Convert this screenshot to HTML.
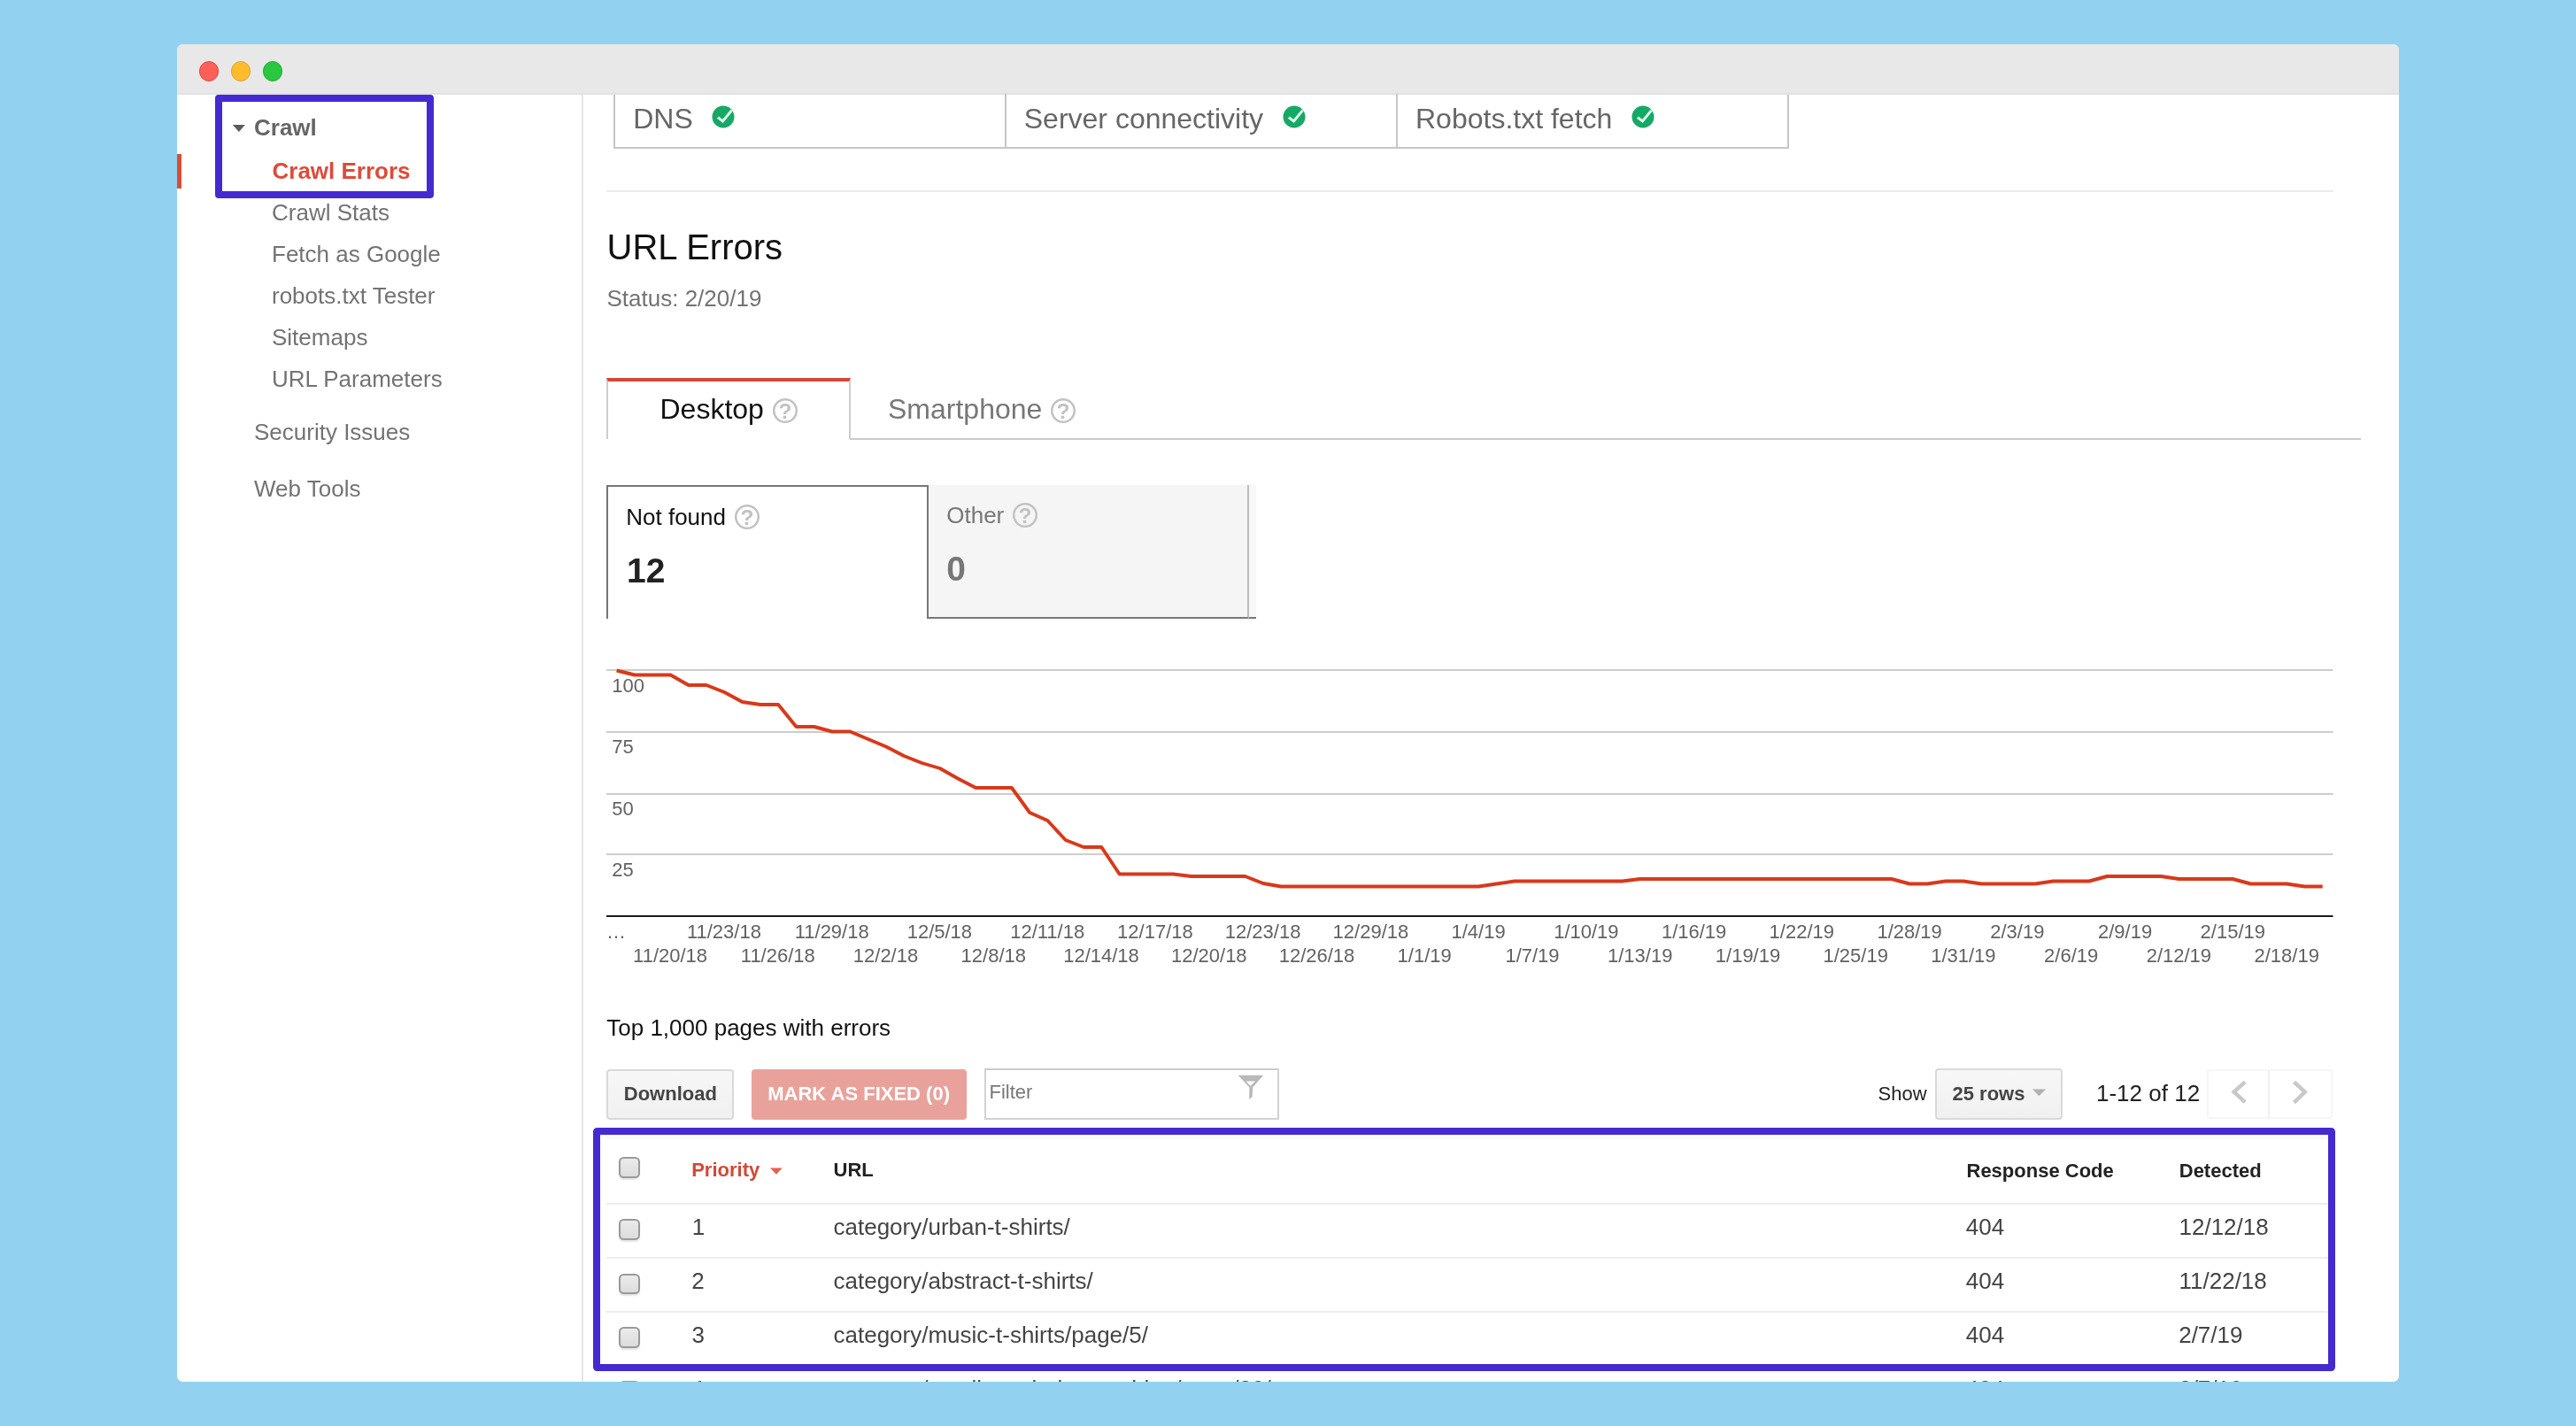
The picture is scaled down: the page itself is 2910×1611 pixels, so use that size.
<!DOCTYPE html>
<html lang="en"><head><meta charset="utf-8"><title>Search Console - Crawl Errors</title><style>
html,body{margin:0;padding:0}
body{width:2910px;height:1611px;background:#92d2f0;position:relative;overflow:hidden;font-family:"Liberation Sans",sans-serif}
.win{position:absolute;left:200px;top:50px;width:2510px;height:1511px;border-radius:6.5px;background:#fff;overflow:hidden}
.page{position:absolute;left:-200px;top:-50px;width:2910px;height:1611px;will-change:transform}
.b{position:absolute;display:block}
.t{position:absolute;white-space:nowrap;line-height:1}
</style></head>
<body>
<div class="win"><div class="page">
<div class="b " style="left:200.00px;top:50.00px;width:2510.00px;height:56.50px;background:#e8e8e8;border-bottom:2px solid #e1e1e1;box-sizing:border-box;"></div>
<div class="b " style="left:224.95px;top:69.45px;width:22.50px;height:22.50px;background:#fe5f57;border:1px solid #e2463f;box-sizing:border-box;border-radius:50%;"></div>
<div class="b " style="left:260.95px;top:69.45px;width:22.50px;height:22.50px;background:#febc2e;border:1px solid #e0a028;box-sizing:border-box;border-radius:50%;"></div>
<div class="b " style="left:296.95px;top:69.45px;width:22.50px;height:22.50px;background:#29c840;border:1px solid #1eab2e;box-sizing:border-box;border-radius:50%;"></div>
<div class="b " style="left:657.00px;top:106.50px;width:2.00px;height:1455.50px;background:#e6e6e6;"></div>
<div class="b " style="left:200.00px;top:174.00px;width:5.00px;height:38.50px;background:#dd4b39;"></div>
<svg class="b" style="left:262px;top:140px" width="16" height="10" viewBox="0 0 16 10"><path d="M0.9 0.9 L14.9 0.9 L7.9 8.9 Z" fill="#5c5c5c"/></svg>
<div class="t " style="left:287.00px;top:131.24px;font-size:26px;color:#666;font-weight:bold;">Crawl</div>
<div class="t " style="left:307.50px;top:180.24px;font-size:26px;color:#dd4b39;font-weight:bold;">Crawl Errors</div>
<div class="t " style="left:307.00px;top:227.24px;font-size:26px;color:#737373;">Crawl Stats</div>
<div class="t " style="left:307.00px;top:274.24px;font-size:26px;color:#737373;">Fetch as Google</div>
<div class="t " style="left:307.00px;top:321.24px;font-size:26px;color:#737373;">robots.txt Tester</div>
<div class="t " style="left:307.00px;top:367.74px;font-size:26px;color:#737373;">Sitemaps</div>
<div class="t " style="left:307.00px;top:415.24px;font-size:26px;color:#737373;">URL Parameters</div>
<div class="t " style="left:287.00px;top:474.74px;font-size:26px;color:#737373;">Security Issues</div>
<div class="t " style="left:287.00px;top:539.24px;font-size:26px;color:#737373;">Web Tools</div>
<div class="b " style="left:243.00px;top:107.00px;width:247.00px;height:117.00px;border:8px solid #452ad1;border-radius:4px;box-sizing:border-box;"></div>
<div class="b " style="left:693.00px;top:106.50px;width:1328.00px;height:61.25px;border:2px solid #c6c6c6;border-top:none;box-sizing:border-box;"></div>
<div class="b " style="left:1135.00px;top:106.00px;width:2.00px;height:60.00px;background:#c6c6c6;"></div>
<div class="b " style="left:1577.00px;top:106.00px;width:2.00px;height:60.00px;background:#c6c6c6;"></div>
<div class="t " style="left:715.25px;top:118.16px;font-size:32px;color:#666;">DNS</div>
<svg class="b" style="left:804.10px;top:118.70px" width="26" height="26" viewBox="0 0 26 26"><circle cx="13" cy="13" r="12.5" fill="#17a866"/><path d="M6.9 13.6 L12.5 17.9 L22.6 5.6" fill="none" stroke="#dcfbea" stroke-width="3"/></svg>
<div class="t " style="left:1156.75px;top:118.16px;font-size:32px;color:#666;">Server connectivity</div>
<svg class="b" style="left:1449.00px;top:118.70px" width="26" height="26" viewBox="0 0 26 26"><circle cx="13" cy="13" r="12.5" fill="#17a866"/><path d="M6.9 13.6 L12.5 17.9 L22.6 5.6" fill="none" stroke="#dcfbea" stroke-width="3"/></svg>
<div class="t " style="left:1599.00px;top:118.16px;font-size:32px;color:#666;">Robots.txt fetch</div>
<svg class="b" style="left:1843.20px;top:118.70px" width="26" height="26" viewBox="0 0 26 26"><circle cx="13" cy="13" r="12.5" fill="#17a866"/><path d="M6.9 13.6 L12.5 17.9 L22.6 5.6" fill="none" stroke="#dcfbea" stroke-width="3"/></svg>
<div class="b " style="left:685.00px;top:215.00px;width:1951.00px;height:2.00px;background:#ececec;"></div>
<div class="t " style="left:685.50px;top:259.14px;font-size:40px;color:#111;">URL Errors</div>
<div class="t " style="left:685.50px;top:324.49px;font-size:26px;color:#737373;">Status: 2/20/19</div>
<div class="b " style="left:960.00px;top:494.75px;width:1707.00px;height:2.00px;background:#cacaca;"></div>
<div class="b " style="left:685.00px;top:426.50px;width:276.00px;height:69.50px;border-top:4.25px solid #d14836;border-left:2px solid #cdcdcd;border-right:2px solid #cdcdcd;box-sizing:border-box;background:#fff;"></div>
<div class="t " style="left:745.50px;top:446.16px;font-size:32px;color:#111;">Desktop</div>
<svg class="b" style="left:871.90px;top:448.90px" width="30" height="30" viewBox="0 0 30 30"><circle cx="15" cy="15" r="12.75" fill="#fff" stroke="#c2c2c2" stroke-width="2.5"/><text x="15" y="23.6" text-anchor="middle" font-family="Liberation Sans, sans-serif" font-weight="bold" font-size="24.5" fill="#c2c2c2">?</text></svg>
<div class="t " style="left:1003.00px;top:446.16px;font-size:32px;color:#777;">Smartphone</div>
<svg class="b" style="left:1185.75px;top:448.90px" width="30" height="30" viewBox="0 0 30 30"><circle cx="15" cy="15" r="12.75" fill="#fff" stroke="#c2c2c2" stroke-width="2.5"/><text x="15" y="23.6" text-anchor="middle" font-family="Liberation Sans, sans-serif" font-weight="bold" font-size="24.5" fill="#c2c2c2">?</text></svg>
<div class="b " style="left:1049.00px;top:547.50px;width:370.00px;height:151.25px;background:#f8f8f8;border-bottom:2.25px solid #777;box-sizing:border-box;"></div>
<div class="b " style="left:1049.00px;top:547.50px;width:362.25px;height:151.25px;background:#f5f5f5;border-bottom:2.25px solid #777;border-right:2px solid #bdbdbd;box-sizing:border-box;"></div>
<div class="b " style="left:685.00px;top:547.50px;width:364.00px;height:151.25px;background:#fff;border-top:2px solid #777;border-left:2px solid #777;border-right:2px solid #777;box-sizing:border-box;"></div>
<div class="t " style="left:707.25px;top:570.99px;font-size:26px;color:#111;">Not found</div>
<svg class="b" style="left:828.75px;top:568.75px" width="30" height="30" viewBox="0 0 30 30"><circle cx="15" cy="15" r="12.75" fill="#fff" stroke="#c2c2c2" stroke-width="2.5"/><text x="15" y="23.6" text-anchor="middle" font-family="Liberation Sans, sans-serif" font-weight="bold" font-size="24.5" fill="#c2c2c2">?</text></svg>
<div class="t " style="left:708.00px;top:624.74px;font-size:39px;color:#222;font-weight:bold;">12</div>
<div class="t " style="left:1069.25px;top:568.74px;font-size:26px;color:#777;">Other</div>
<svg class="b" style="left:1143.00px;top:566.75px" width="30" height="30" viewBox="0 0 30 30"><circle cx="15" cy="15" r="12.75" fill="#f5f5f5" stroke="#c2c2c2" stroke-width="2.5"/><text x="15" y="23.6" text-anchor="middle" font-family="Liberation Sans, sans-serif" font-weight="bold" font-size="24.5" fill="#c2c2c2">?</text></svg>
<div class="t " style="left:1069.25px;top:622.74px;font-size:39px;color:#777;font-weight:bold;">0</div>
<svg class="b" style="left:0;top:0" width="2910" height="1611" viewBox="0 0 2910 1611" font-family="Liberation Sans, sans-serif"><rect x="685" y="756.00" width="1950.5" height="2" fill="#cccccc"/><rect x="685" y="826.00" width="1950.5" height="2" fill="#cccccc"/><rect x="685" y="896.00" width="1950.5" height="2" fill="#cccccc"/><rect x="685" y="964.10" width="1950.5" height="2" fill="#cccccc"/><rect x="685" y="1034" width="1950.5" height="2" fill="#1c1c1c"/><text x="691.3" y="781.75" font-size="22" fill="#626262">100</text><text x="691.3" y="850.9" font-size="22" fill="#626262">75</text><text x="691.3" y="920.5" font-size="22" fill="#626262">50</text><text x="691.3" y="990" font-size="22" fill="#626262">25</text><polyline points="696.6,757.5 716.9,762.5 737.2,762.5 757.5,762.5 777.7,774.0 798.0,774.0 818.3,782.0 838.6,793.0 858.9,796.0 879.2,796.0 899.5,821.0 919.7,821.0 940.0,826.5 960.3,826.5 980.6,835.0 1000.9,843.5 1021.2,854.0 1041.4,862.0 1061.7,868.0 1082.0,879.5 1102.3,890.0 1122.6,890.0 1142.9,890.0 1163.2,918.0 1183.4,927.0 1203.7,949.0 1224.0,957.0 1244.3,957.0 1264.6,987.5 1284.9,987.5 1305.2,987.5 1325.4,987.5 1345.7,990.0 1366.0,990.0 1386.3,990.0 1406.6,990.0 1426.9,998.0 1447.1,1001.5 1467.4,1001.5 1487.7,1001.5 1508.0,1001.5 1528.3,1001.5 1548.6,1001.5 1568.9,1001.5 1589.1,1001.5 1609.4,1001.5 1629.7,1001.5 1650.0,1001.5 1670.3,1001.5 1690.6,998.5 1710.8,995.5 1731.1,995.5 1751.4,995.5 1771.7,995.5 1792.0,995.5 1812.3,995.5 1832.6,995.5 1852.8,993.0 1873.1,993.0 1893.4,993.0 1913.7,993.0 1934.0,993.0 1954.3,993.0 1974.6,993.0 1994.8,993.0 2015.1,993.0 2035.4,993.0 2055.7,993.0 2076.0,993.0 2096.3,993.0 2116.6,993.0 2136.8,993.0 2157.1,998.5 2177.4,998.5 2197.7,995.5 2218.0,995.5 2238.3,998.5 2258.5,998.5 2278.8,998.5 2299.1,998.5 2319.4,995.5 2339.7,995.5 2360.0,995.5 2380.3,990.0 2400.5,990.0 2420.8,990.0 2441.1,990.0 2461.4,993.0 2481.7,993.0 2502.0,993.0 2522.2,993.0 2542.5,998.5 2562.8,998.5 2583.1,998.5 2603.4,1001.5 2623.7,1001.5" fill="none" stroke="#d8391a" stroke-width="3.9" stroke-linejoin="round"/><text x="685" y="1060.4" font-size="22" fill="#626262">…</text><text x="757.1" y="1087" font-size="22" fill="#626262" text-anchor="middle">11/20/18</text><text x="817.9" y="1060.4" font-size="22" fill="#626262" text-anchor="middle">11/23/18</text><text x="878.8" y="1087" font-size="22" fill="#626262" text-anchor="middle">11/26/18</text><text x="939.7" y="1060.4" font-size="22" fill="#626262" text-anchor="middle">11/29/18</text><text x="1000.5" y="1087" font-size="22" fill="#626262" text-anchor="middle">12/2/18</text><text x="1061.4" y="1060.4" font-size="22" fill="#626262" text-anchor="middle">12/5/18</text><text x="1122.3" y="1087" font-size="22" fill="#626262" text-anchor="middle">12/8/18</text><text x="1183.2" y="1060.4" font-size="22" fill="#626262" text-anchor="middle">12/11/18</text><text x="1244.0" y="1087" font-size="22" fill="#626262" text-anchor="middle">12/14/18</text><text x="1304.9" y="1060.4" font-size="22" fill="#626262" text-anchor="middle">12/17/18</text><text x="1365.8" y="1087" font-size="22" fill="#626262" text-anchor="middle">12/20/18</text><text x="1426.6" y="1060.4" font-size="22" fill="#626262" text-anchor="middle">12/23/18</text><text x="1487.5" y="1087" font-size="22" fill="#626262" text-anchor="middle">12/26/18</text><text x="1548.4" y="1060.4" font-size="22" fill="#626262" text-anchor="middle">12/29/18</text><text x="1609.2" y="1087" font-size="22" fill="#626262" text-anchor="middle">1/1/19</text><text x="1670.1" y="1060.4" font-size="22" fill="#626262" text-anchor="middle">1/4/19</text><text x="1731.0" y="1087" font-size="22" fill="#626262" text-anchor="middle">1/7/19</text><text x="1791.9" y="1060.4" font-size="22" fill="#626262" text-anchor="middle">1/10/19</text><text x="1852.7" y="1087" font-size="22" fill="#626262" text-anchor="middle">1/13/19</text><text x="1913.6" y="1060.4" font-size="22" fill="#626262" text-anchor="middle">1/16/19</text><text x="1974.5" y="1087" font-size="22" fill="#626262" text-anchor="middle">1/19/19</text><text x="2035.3" y="1060.4" font-size="22" fill="#626262" text-anchor="middle">1/22/19</text><text x="2096.2" y="1087" font-size="22" fill="#626262" text-anchor="middle">1/25/19</text><text x="2157.1" y="1060.4" font-size="22" fill="#626262" text-anchor="middle">1/28/19</text><text x="2217.9" y="1087" font-size="22" fill="#626262" text-anchor="middle">1/31/19</text><text x="2278.8" y="1060.4" font-size="22" fill="#626262" text-anchor="middle">2/3/19</text><text x="2339.7" y="1087" font-size="22" fill="#626262" text-anchor="middle">2/6/19</text><text x="2400.6" y="1060.4" font-size="22" fill="#626262" text-anchor="middle">2/9/19</text><text x="2461.4" y="1087" font-size="22" fill="#626262" text-anchor="middle">2/12/19</text><text x="2522.3" y="1060.4" font-size="22" fill="#626262" text-anchor="middle">2/15/19</text><text x="2583.2" y="1087" font-size="22" fill="#626262" text-anchor="middle">2/18/19</text></svg>
<div class="t " style="left:685.25px;top:1148.24px;font-size:26px;color:#111;">Top 1,000 pages with errors</div>
<div class="b " style="left:685.00px;top:1207.50px;width:144.00px;height:57.00px;border:2px solid #d9d9d9;border-radius:4px;box-sizing:border-box;background:linear-gradient(#f7f7f7,#f0f0f0);"></div>
<div class="t " style="left:704.75px;top:1224.63px;font-size:22px;color:#444;font-weight:bold;">Download</div>
<div class="b " style="left:849.00px;top:1207.50px;width:243.25px;height:57.00px;background:#e9a29b;border-radius:4px;"></div>
<div class="t " style="left:867.25px;top:1224.63px;font-size:22px;color:#fff;font-weight:bold;">MARK AS FIXED (0)</div>
<div class="b " style="left:1112.00px;top:1207.25px;width:333.00px;height:57.50px;border:2px solid #d2d2d2;border-top-color:#cbcbcb;box-sizing:border-box;background:#fff;"></div>
<div class="t " style="left:1117.50px;top:1222.63px;font-size:22px;color:#777;">Filter</div>
<svg class="b" style="left:1396px;top:1212px" width="34" height="32" viewBox="0 0 34 32"><path d="M2.6 2.8 L31.2 2.8 L19.2 16.6 L18.6 27.2 L15.2 30 L15.4 16.6 Z M11.5 9.4 L16.7 14.8 L21.8 9.4 Z" fill="#b9b9b9" fill-rule="evenodd"/></svg>
<div class="t " style="left:2121.50px;top:1224.88px;font-size:22px;color:#222;">Show</div>
<div class="b " style="left:2186.25px;top:1207.25px;width:143.25px;height:57.75px;border:2px solid #d9d9d9;border-radius:4px;box-sizing:border-box;background:linear-gradient(#f7f7f7,#f0f0f0);"></div>
<div class="t " style="left:2205.50px;top:1224.88px;font-size:22px;color:#444;font-weight:bold;">25 rows</div>
<svg class="b" style="left:2295px;top:1229px" width="18" height="11" viewBox="0 0 18 11"><path d="M1 1.5 L16 1.5 L8.5 9.2 Z" fill="#b0b0b0"/></svg>
<div class="t " style="left:2368.00px;top:1221.99px;font-size:26px;color:#222;">1-12 of 12</div>
<div class="b " style="left:2492.50px;top:1208.00px;width:142.00px;height:55.75px;border:2px solid #f6f6f6;border-radius:3px;box-sizing:border-box;background:#fff;"></div>
<div class="b " style="left:2562.00px;top:1209.00px;width:2.00px;height:54.00px;background:#f0f0f0;"></div>
<svg class="b" style="left:2515px;top:1215px" width="100" height="38" viewBox="0 0 100 38"><path d="M21.1 7.4 L8.6 18.6 L21.1 30.2" fill="none" stroke="#c8c8c8" stroke-width="4.4"/><path d="M76.5 7.4 L88.8 18.6 L76.5 30.6" fill="none" stroke="#c8c8c8" stroke-width="4.4"/></svg>
<div class="b " style="left:685.00px;top:1284.75px;width:1951.00px;height:2.00px;background:#f7f7f5;"></div>
<div class="b " style="left:685.00px;top:1359.25px;width:1951.00px;height:2.00px;background:#ededed;"></div>
<div class="b " style="left:685.00px;top:1419.75px;width:1951.00px;height:2.00px;background:#ededed;"></div>
<div class="b " style="left:685.00px;top:1481.25px;width:1951.00px;height:2.00px;background:#ededed;"></div>
<div class="b " style="left:685.00px;top:1542.25px;width:1951.00px;height:2.00px;background:#ededed;"></div>
<div class="b " style="left:699.20px;top:1307.10px;width:23.50px;height:23.50px;border:2px solid #9a9a9a;border-radius:5.5px;box-sizing:border-box;background:linear-gradient(#ebebeb,#dcdcdc);box-shadow:0 1.5px 1.5px rgba(0,0,0,.10);"></div>
<div class="b " style="left:699.20px;top:1377.10px;width:23.50px;height:23.50px;border:2px solid #9a9a9a;border-radius:5.5px;box-sizing:border-box;background:linear-gradient(#ebebeb,#dcdcdc);box-shadow:0 1.5px 1.5px rgba(0,0,0,.10);"></div>
<div class="b " style="left:699.20px;top:1438.50px;width:23.50px;height:23.50px;border:2px solid #9a9a9a;border-radius:5.5px;box-sizing:border-box;background:linear-gradient(#ebebeb,#dcdcdc);box-shadow:0 1.5px 1.5px rgba(0,0,0,.10);"></div>
<div class="b " style="left:699.20px;top:1499.30px;width:23.50px;height:23.50px;border:2px solid #9a9a9a;border-radius:5.5px;box-sizing:border-box;background:linear-gradient(#ebebeb,#dcdcdc);box-shadow:0 1.5px 1.5px rgba(0,0,0,.10);"></div>
<div class="b " style="left:699.20px;top:1560.30px;width:23.50px;height:23.50px;border:2px solid #9a9a9a;border-radius:5.5px;box-sizing:border-box;background:linear-gradient(#ebebeb,#dcdcdc);box-shadow:0 1.5px 1.5px rgba(0,0,0,.10);"></div>
<div class="t " style="left:781.20px;top:1311.38px;font-size:22px;color:#d14836;font-weight:bold;">Priority</div>
<svg class="b" style="left:869px;top:1318px" width="16" height="10" viewBox="0 0 16 10"><path d="M1 1.5 L14.8 1.5 L7.9 8.8 Z" fill="#e2604f"/></svg>
<div class="t " style="left:941.50px;top:1311.38px;font-size:22px;color:#222;font-weight:bold;">URL</div>
<div class="t " style="left:2221.50px;top:1311.63px;font-size:22px;color:#222;font-weight:bold;">Response Code</div>
<div class="t " style="left:2461.75px;top:1311.63px;font-size:22px;color:#222;font-weight:bold;">Detected</div>
<div class="t " style="left:781.80px;top:1373.24px;font-size:26px;color:#444;">1</div>
<div class="t " style="left:941.50px;top:1373.24px;font-size:26px;color:#444;">category/urban-t-shirts/</div>
<div class="t " style="left:2220.75px;top:1373.24px;font-size:26px;color:#444;">404</div>
<div class="t " style="left:2461.50px;top:1373.24px;font-size:26px;color:#444;">12/12/18</div>
<div class="t " style="left:781.30px;top:1434.24px;font-size:26px;color:#444;">2</div>
<div class="t " style="left:941.50px;top:1434.24px;font-size:26px;color:#444;">category/abstract-t-shirts/</div>
<div class="t " style="left:2220.75px;top:1434.24px;font-size:26px;color:#444;">404</div>
<div class="t " style="left:2461.50px;top:1434.24px;font-size:26px;color:#444;">11/22/18</div>
<div class="t " style="left:781.50px;top:1494.99px;font-size:26px;color:#444;">3</div>
<div class="t " style="left:941.50px;top:1494.99px;font-size:26px;color:#444;">category/music-t-shirts/page/5/</div>
<div class="t " style="left:2220.75px;top:1494.99px;font-size:26px;color:#444;">404</div>
<div class="t " style="left:2461.20px;top:1494.99px;font-size:26px;color:#444;">2/7/19</div>
<div class="t " style="left:780.80px;top:1555.99px;font-size:26px;color:#444;">4</div>
<div class="t " style="left:941.50px;top:1555.99px;font-size:26px;color:#444;">category/smallest-shelves-t-shirts/page/20/</div>
<div class="t " style="left:2220.75px;top:1555.99px;font-size:26px;color:#444;">404</div>
<div class="t " style="left:2461.20px;top:1555.99px;font-size:26px;color:#444;">2/7/19</div>
<div class="b " style="left:670.00px;top:1274.00px;width:1968.00px;height:275.00px;border:8px solid #452ad1;border-radius:4.5px;box-sizing:border-box;"></div>
</div></div>
</body></html>
